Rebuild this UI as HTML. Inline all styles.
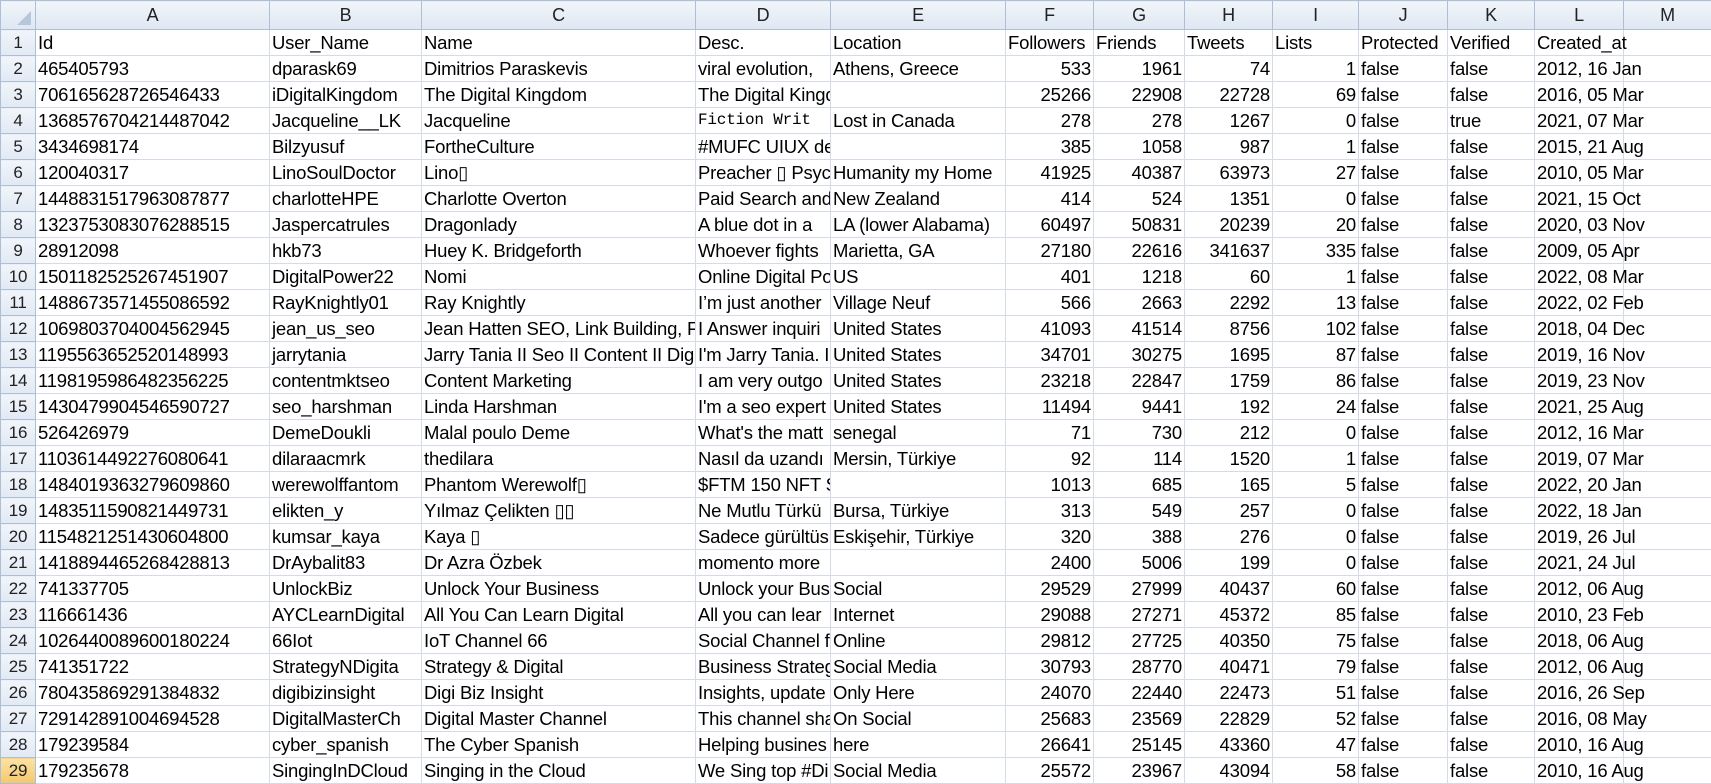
<!DOCTYPE html>
<html><head><meta charset="utf-8"><style>
body{margin:0;background:#fff;width:1711px;height:784px;overflow:hidden;font-family:"Liberation Sans","Noto Sans CJK SC",sans-serif;}
table{border-collapse:collapse;table-layout:fixed;width:1711px;}
td{border:1px solid #d4dbe7;height:25px;padding:0 2px;font-size:18.5px;color:#000;white-space:nowrap;overflow:hidden;letter-spacing:-0.2px;line-height:25px}
tr.h td{height:28px;background:linear-gradient(#f1f5fb,#dfe7f2);border-color:#aebed4;text-align:center;color:#222;font-size:18px}
td.r{background:linear-gradient(#f1f5fb,#e2e9f3);border-color:#aebed4;text-align:center;color:#222;padding:0;font-size:17px}
td.n{text-align:right}
td:nth-child(13){overflow:visible}
td.sel{background:linear-gradient(#fbe3a5,#f6c76b)}
td.c0{background:#dfe7f2;position:relative}
.mono{font-family:"Liberation Mono",monospace;font-size:16px}
</style></head><body>
<table>
<colgroup><col style="width:35px"><col style="width:234px"><col style="width:152px"><col style="width:274px"><col style="width:135px"><col style="width:175px"><col style="width:88px"><col style="width:91px"><col style="width:88px"><col style="width:86px"><col style="width:89px"><col style="width:87px"><col style="width:89px"><col style="width:88px"></colgroup>
<tr class="h"><td class="c0"><svg width="20" height="20" style="position:absolute;right:2px;bottom:2px"><polygon points="18,4 18,18 4,18" fill="#b8c6d9"/></svg></td><td>A</td><td>B</td><td>C</td><td>D</td><td>E</td><td>F</td><td>G</td><td>H</td><td>I</td><td>J</td><td>K</td><td>L</td><td>M</td></tr>
<tr><td class="r">1</td><td>Id</td><td>User_Name</td><td>Name</td><td>Desc.</td><td>Location</td><td>Followers</td><td>Friends</td><td>Tweets</td><td>Lists</td><td>Protected</td><td>Verified</td><td>Created_at</td><td></td></tr>
<tr><td class="r">2</td><td>465405793</td><td>dparask69</td><td>Dimitrios Paraskevis</td><td>viral evolution,</td><td>Athens, Greece</td><td class="n">533</td><td class="n">1961</td><td class="n">74</td><td class="n">1</td><td>false</td><td>false</td><td>2012, 16 Jan</td><td></td></tr>
<tr><td class="r">3</td><td>706165628726546433</td><td>iDigitalKingdom</td><td>The Digital Kingdom</td><td>The Digital Kingdom</td><td></td><td class="n">25266</td><td class="n">22908</td><td class="n">22728</td><td class="n">69</td><td>false</td><td>false</td><td>2016, 05 Mar</td><td></td></tr>
<tr><td class="r">4</td><td>1368576704214487042</td><td>Jacqueline__LK</td><td>Jacqueline</td><td class="mono">Fiction Writ</td><td>Lost in Canada</td><td class="n">278</td><td class="n">278</td><td class="n">1267</td><td class="n">0</td><td>false</td><td>true</td><td>2021, 07 Mar</td><td></td></tr>
<tr><td class="r">5</td><td>3434698174</td><td>Bilzyusuf</td><td>FortheCulture</td><td>#MUFC UIUX de</td><td></td><td class="n">385</td><td class="n">1058</td><td class="n">987</td><td class="n">1</td><td>false</td><td>false</td><td>2015, 21 Aug</td><td></td></tr>
<tr><td class="r">6</td><td>120040317</td><td>LinoSoulDoctor</td><td>Lino▯</td><td>Preacher ▯ Psych</td><td>Humanity my Home</td><td class="n">41925</td><td class="n">40387</td><td class="n">63973</td><td class="n">27</td><td>false</td><td>false</td><td>2010, 05 Mar</td><td></td></tr>
<tr><td class="r">7</td><td>1448831517963087877</td><td>charlotteHPE</td><td>Charlotte Overton</td><td>Paid Search and</td><td>New Zealand</td><td class="n">414</td><td class="n">524</td><td class="n">1351</td><td class="n">0</td><td>false</td><td>false</td><td>2021, 15 Oct</td><td></td></tr>
<tr><td class="r">8</td><td>1323753083076288515</td><td>Jaspercatrules</td><td>Dragonlady</td><td>A blue dot in a</td><td>LA (lower Alabama)</td><td class="n">60497</td><td class="n">50831</td><td class="n">20239</td><td class="n">20</td><td>false</td><td>false</td><td>2020, 03 Nov</td><td></td></tr>
<tr><td class="r">9</td><td>28912098</td><td>hkb73</td><td>Huey K. Bridgeforth</td><td>Whoever fights</td><td>Marietta, GA</td><td class="n">27180</td><td class="n">22616</td><td class="n">341637</td><td class="n">335</td><td>false</td><td>false</td><td>2009, 05 Apr</td><td></td></tr>
<tr><td class="r">10</td><td>1501182525267451907</td><td>DigitalPower22</td><td>Nomi</td><td>Online Digital Po</td><td>US</td><td class="n">401</td><td class="n">1218</td><td class="n">60</td><td class="n">1</td><td>false</td><td>false</td><td>2022, 08 Mar</td><td></td></tr>
<tr><td class="r">11</td><td>1488673571455086592</td><td>RayKnightly01</td><td>Ray Knightly</td><td>I’m just another</td><td>Village Neuf</td><td class="n">566</td><td class="n">2663</td><td class="n">2292</td><td class="n">13</td><td>false</td><td>false</td><td>2022, 02 Feb</td><td></td></tr>
<tr><td class="r">12</td><td>1069803704004562945</td><td>jean_us_seo</td><td>Jean Hatten SEO, Link Building, F</td><td>I Answer inquiri</td><td>United States</td><td class="n">41093</td><td class="n">41514</td><td class="n">8756</td><td class="n">102</td><td>false</td><td>false</td><td>2018, 04 Dec</td><td></td></tr>
<tr><td class="r">13</td><td>1195563652520148993</td><td>jarrytania</td><td>Jarry Tania II Seo II Content II Dig</td><td>I'm Jarry Tania. I</td><td>United States</td><td class="n">34701</td><td class="n">30275</td><td class="n">1695</td><td class="n">87</td><td>false</td><td>false</td><td>2019, 16 Nov</td><td></td></tr>
<tr><td class="r">14</td><td>1198195986482356225</td><td>contentmktseo</td><td>Content Marketing</td><td>I am very outgo</td><td>United States</td><td class="n">23218</td><td class="n">22847</td><td class="n">1759</td><td class="n">86</td><td>false</td><td>false</td><td>2019, 23 Nov</td><td></td></tr>
<tr><td class="r">15</td><td>1430479904546590727</td><td>seo_harshman</td><td>Linda Harshman</td><td>I'm a seo expert</td><td>United States</td><td class="n">11494</td><td class="n">9441</td><td class="n">192</td><td class="n">24</td><td>false</td><td>false</td><td>2021, 25 Aug</td><td></td></tr>
<tr><td class="r">16</td><td>526426979</td><td>DemeDoukli</td><td>Malal poulo Deme</td><td>What's the matt</td><td>senegal</td><td class="n">71</td><td class="n">730</td><td class="n">212</td><td class="n">0</td><td>false</td><td>false</td><td>2012, 16 Mar</td><td></td></tr>
<tr><td class="r">17</td><td>1103614492276080641</td><td>dilaraacmrk</td><td>thedilara</td><td>Nasıl da uzandı</td><td>Mersin, Türkiye</td><td class="n">92</td><td class="n">114</td><td class="n">1520</td><td class="n">1</td><td>false</td><td>false</td><td>2019, 07 Mar</td><td></td></tr>
<tr><td class="r">18</td><td>1484019363279609860</td><td>werewolffantom</td><td>Phantom Werewolf▯</td><td>$FTM  150 NFT S</td><td></td><td class="n">1013</td><td class="n">685</td><td class="n">165</td><td class="n">5</td><td>false</td><td>false</td><td>2022, 20 Jan</td><td></td></tr>
<tr><td class="r">19</td><td>1483511590821449731</td><td>elikten_y</td><td>Yılmaz Çelikten ▯▯</td><td>Ne Mutlu Türkü</td><td>Bursa, Türkiye</td><td class="n">313</td><td class="n">549</td><td class="n">257</td><td class="n">0</td><td>false</td><td>false</td><td>2022, 18 Jan</td><td></td></tr>
<tr><td class="r">20</td><td>1154821251430604800</td><td>kumsar_kaya</td><td>Kaya ▯</td><td>Sadece gürültüs</td><td>Eskişehir, Türkiye</td><td class="n">320</td><td class="n">388</td><td class="n">276</td><td class="n">0</td><td>false</td><td>false</td><td>2019, 26 Jul</td><td></td></tr>
<tr><td class="r">21</td><td>1418894465268428813</td><td>DrAybalit83</td><td>Dr Azra Özbek</td><td>momento more</td><td></td><td class="n">2400</td><td class="n">5006</td><td class="n">199</td><td class="n">0</td><td>false</td><td>false</td><td>2021, 24 Jul</td><td></td></tr>
<tr><td class="r">22</td><td>741337705</td><td>UnlockBiz</td><td>Unlock Your Business</td><td>Unlock your Bus</td><td>Social</td><td class="n">29529</td><td class="n">27999</td><td class="n">40437</td><td class="n">60</td><td>false</td><td>false</td><td>2012, 06 Aug</td><td></td></tr>
<tr><td class="r">23</td><td>116661436</td><td>AYCLearnDigital</td><td>All You Can Learn Digital</td><td>All you can lear</td><td>Internet</td><td class="n">29088</td><td class="n">27271</td><td class="n">45372</td><td class="n">85</td><td>false</td><td>false</td><td>2010, 23 Feb</td><td></td></tr>
<tr><td class="r">24</td><td>1026440089600180224</td><td>66Iot</td><td>IoT Channel 66</td><td>Social Channel f</td><td>Online</td><td class="n">29812</td><td class="n">27725</td><td class="n">40350</td><td class="n">75</td><td>false</td><td>false</td><td>2018, 06 Aug</td><td></td></tr>
<tr><td class="r">25</td><td>741351722</td><td>StrategyNDigita</td><td>Strategy &amp; Digital</td><td>Business Strateg</td><td>Social Media</td><td class="n">30793</td><td class="n">28770</td><td class="n">40471</td><td class="n">79</td><td>false</td><td>false</td><td>2012, 06 Aug</td><td></td></tr>
<tr><td class="r">26</td><td>780435869291384832</td><td>digibizinsight</td><td>Digi Biz Insight</td><td>Insights, update</td><td>Only Here</td><td class="n">24070</td><td class="n">22440</td><td class="n">22473</td><td class="n">51</td><td>false</td><td>false</td><td>2016, 26 Sep</td><td></td></tr>
<tr><td class="r">27</td><td>729142891004694528</td><td>DigitalMasterCh</td><td>Digital Master Channel</td><td>This channel sha</td><td>On Social</td><td class="n">25683</td><td class="n">23569</td><td class="n">22829</td><td class="n">52</td><td>false</td><td>false</td><td>2016, 08 May</td><td></td></tr>
<tr><td class="r">28</td><td>179239584</td><td>cyber_spanish</td><td>The Cyber Spanish</td><td>Helping busines</td><td>here</td><td class="n">26641</td><td class="n">25145</td><td class="n">43360</td><td class="n">47</td><td>false</td><td>false</td><td>2010, 16 Aug</td><td></td></tr>
<tr><td class="r sel">29</td><td>179235678</td><td>SingingInDCloud</td><td>Singing in the Cloud</td><td>We Sing top #Di</td><td>Social Media</td><td class="n">25572</td><td class="n">23967</td><td class="n">43094</td><td class="n">58</td><td>false</td><td>false</td><td>2010, 16 Aug</td><td></td></tr>
</table>
</body></html>
